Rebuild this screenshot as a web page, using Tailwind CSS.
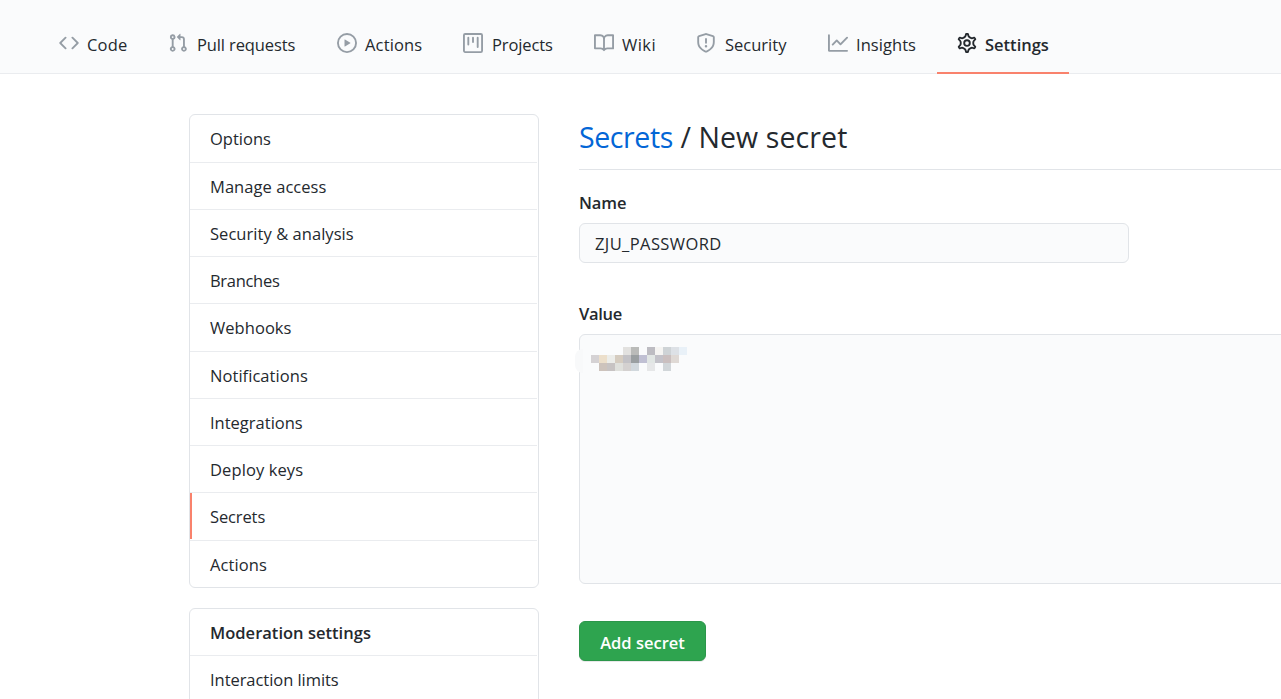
<!DOCTYPE html>
<html lang="en">
<head>
<meta charset="utf-8">
<title>New secret</title>
<script src="https://cdn.jsdelivr.net/npm/@tailwindcss/browser@4"></script>
</head>
<body class="h-[699px] w-[1281px] overflow-hidden bg-white font-['Open_Sans','Noto_Sans',sans-serif] text-[16.5px] leading-6 text-[#24292e]">
<nav class="flex h-[74px] items-end border-b border-[#eaecef] bg-[#fafbfc] pl-[39px] whitespace-nowrap">
  <a class="flex h-[61px] w-[109px] shrink-0 gap-2 pt-[21px] pl-5"><svg class="size-5 shrink-0 fill-[#959da5]" viewBox="0 0 16 16"><path d="M4.72 3.22a.75.75 0 011.06 1.06L2.06 8l3.72 3.72a.75.75 0 11-1.06 1.06L.47 8.53a.75.75 0 010-1.06l4.25-4.25zm6.56 0a.75.75 0 10-1.06 1.06L13.94 8l-3.72 3.72a.75.75 0 101.06 1.06l4.25-4.25a.75.75 0 000-1.06l-4.25-4.25z"/></svg><span class="tracking-[0.2px]">Code</span></a>
  <a class="flex h-[61px] w-[169px] shrink-0 gap-[9px] pt-[21px] pl-5"><svg class="size-5 shrink-0 fill-[#959da5]" viewBox="0 0 16 16"><path fill-rule="evenodd" d="M7.177 3.073L9.573.677A.25.25 0 0110 .854v4.792a.25.25 0 01-.427.177L7.177 3.427a.25.25 0 010-.354zM3.75 2.5a.75.75 0 100 1.5.75.75 0 000-1.5zm-2.25.75a2.25 2.25 0 113 2.122v5.256a2.251 2.251 0 11-1.5 0V5.372A2.25 2.25 0 011.5 3.25zM11 2.5h-1V4h1a1 1 0 011 1v5.628a2.251 2.251 0 101.5 0V5A2.5 2.5 0 0011 2.5zm1 10.25a.75.75 0 111.5 0 .75.75 0 01-1.5 0zM3.75 12a.75.75 0 100 1.5.75.75 0 000-1.5z"/></svg><span class="tracking-[-0.12px]">Pull requests</span></a>
  <a class="flex h-[61px] w-[126px] shrink-0 gap-2 pt-[21px] pl-5"><svg class="size-5 shrink-0 fill-[#959da5]" viewBox="0 0 16 16"><path fill-rule="evenodd" d="M1.5 8a6.5 6.5 0 1113 0 6.5 6.5 0 01-13 0zM8 0a8 8 0 100 16A8 8 0 008 0zM6.379 5.227A.25.25 0 006 5.442v5.117a.25.25 0 00.379.214l4.264-2.559a.25.25 0 000-.428L6.379 5.227z"/></svg><span class="tracking-[0.15px]">Actions</span></a>
  <a class="flex h-[61px] w-[131px] shrink-0 gap-[9px] pt-[21px] pl-5"><svg class="size-5 shrink-0 fill-[#959da5]" viewBox="0 0 16 16"><path fill-rule="evenodd" d="M1.75 0A1.75 1.75 0 000 1.75v12.5C0 15.216.784 16 1.75 16h12.5A1.75 1.75 0 0016 14.25V1.75A1.75 1.75 0 0014.25 0H1.75zM1.5 1.75a.25.25 0 01.25-.25h12.5a.25.25 0 01.25.25v12.5a.25.25 0 01-.25.25H1.75a.25.25 0 01-.25-.25V1.75zM11.75 3a.75.75 0 00-.75.75v7.5a.75.75 0 001.5 0v-7.5a.75.75 0 00-.75-.75zm-8.25.75a.75.75 0 011.5 0v5.5a.75.75 0 01-1.5 0v-5.5zM8 3a.75.75 0 00-.75.75v3.5a.75.75 0 001.5 0v-3.5A.75.75 0 008 3z"/></svg><span class="tracking-[-0.1px]">Projects</span></a>
  <a class="flex h-[61px] w-[102px] shrink-0 gap-2 pt-[21px] pl-5"><svg class="size-5 shrink-0 fill-[#959da5]" viewBox="0 0 16 16"><path fill-rule="evenodd" d="M0 1.75A.75.75 0 01.75 1h4.253c1.227 0 2.317.59 3 1.501A3.744 3.744 0 0111.006 1h4.245a.75.75 0 01.75.75v10.5a.75.75 0 01-.75.75h-4.507a2.25 2.25 0 00-1.591.659l-.622.621a.75.75 0 01-1.06 0l-.622-.621A2.25 2.25 0 005.258 13H.75a.75.75 0 01-.75-.75V1.75zm8.755 3a2.25 2.25 0 012.25-2.25H14.5v9h-3.757c-.71 0-1.4.201-1.992.572l.004-7.322zm-1.504 7.324l.004-5.073-.002-2.253A2.25 2.25 0 005.003 2.5H1.5v9h3.757a3.75 3.75 0 011.994.574z"/></svg><span class="tracking-[0.45px]">Wiki</span></a>
  <a class="flex h-[61px] w-[132px] shrink-0 gap-[9px] pt-[21px] pl-5"><svg class="size-5 shrink-0 fill-[#959da5]" viewBox="0 0 16 16"><path fill-rule="evenodd" d="M7.467.133a1.75 1.75 0 011.066 0l5.25 1.68A1.75 1.75 0 0115 3.48V7c0 1.566-.32 3.182-1.303 4.682-.983 1.498-2.585 2.813-5.032 3.855a1.7 1.7 0 01-1.33 0c-2.447-1.042-4.049-2.357-5.032-3.855C1.32 10.182 1 8.566 1 7V3.48a1.75 1.75 0 011.217-1.667l5.25-1.68zm.61 1.429a.25.25 0 00-.153 0l-5.25 1.68a.25.25 0 00-.174.238V7c0 1.358.275 2.666 1.057 3.86.784 1.194 2.121 2.34 4.366 3.297a.2.2 0 00.154 0c2.245-.956 3.582-2.104 4.366-3.298C13.225 9.666 13.5 8.36 13.5 7V3.48a.25.25 0 00-.174-.237l-5.25-1.68zM9 10.5a1 1 0 11-2 0 1 1 0 012 0zm-.25-5.75a.75.75 0 10-1.5 0v3a.75.75 0 001.5 0v-3z"/></svg><span class="tracking-[0px]">Security</span></a>
  <a class="flex h-[61px] w-[129px] shrink-0 gap-2 pt-[21px] pl-5"><svg class="size-5 shrink-0 fill-[#959da5]" viewBox="0 0 16 16"><path fill-rule="evenodd" d="M1.5 1.75a.75.75 0 00-1.5 0v12.5c0 .414.336.75.75.75h14.5a.75.75 0 000-1.5H1.5V1.75zm14.28 2.53a.75.75 0 00-1.06-1.06L10 7.94 7.53 5.47a.75.75 0 00-1.06 0L3.22 8.72a.75.75 0 001.06 1.06L7 7.06l2.47 2.47a.75.75 0 001.06 0l5.25-5.25z"/></svg><span class="tracking-[0.05px]">Insights</span></a>
  <a class="-mb-px flex h-[61px] w-[132px] shrink-0 gap-2 border-b-2 border-[#f9826c] pt-5 pl-5 font-semibold"><svg class="size-5 shrink-0 fill-none stroke-[#24292e]" viewBox="0 0 16 16"><path transform="translate(8 8) scale(1.12) translate(-8 -8)" stroke-width="1.34" d="M7.429 1.525a6.593 6.593 0 011.142 0c.036.003.108.036.137.146l.289 1.105c.147.56.55.967.997 1.189.174.086.341.183.501.29.417.278.97.423 1.53.27l1.102-.303c.11-.03.175.016.195.046.219.31.41.641.573.989.014.031.022.11-.059.19l-.815.806c-.411.406-.562.957-.53 1.456a4.588 4.588 0 010 .582c-.032.499.119 1.05.53 1.456l.815.806c.08.08.073.159.059.19a6.494 6.494 0 01-.573.99c-.02.029-.086.074-.195.045l-1.103-.303c-.559-.153-1.112-.008-1.529.27-.16.107-.327.204-.5.29-.449.222-.851.628-.998 1.189l-.289 1.105c-.029.11-.101.143-.137.146a6.613 6.613 0 01-1.142 0c-.036-.003-.108-.037-.137-.146l-.289-1.105c-.147-.56-.55-.967-.997-1.189a4.502 4.502 0 01-.501-.29c-.417-.278-.97-.423-1.53-.27l-1.102.303c-.11.03-.175-.016-.195-.046a6.492 6.492 0 01-.573-.989c-.014-.031-.022-.11.059-.19l.815-.806c.411-.406.562-.957.53-1.456a4.587 4.587 0 010-.582c.032-.499-.119-1.05-.53-1.456l-.815-.806c-.08-.08-.073-.159-.059-.19a6.44 6.44 0 01.573-.99c.02-.029.086-.075.195-.045l1.103.303c.559.153 1.112.008 1.529-.27.16-.107.327-.204.5-.29.449-.222.851-.628.998-1.189l.289-1.105c.029-.11.101-.143.137-.146z"/><circle cx="8" cy="8" r="2.25" stroke-width="1.5"/></svg><span class="tracking-[0px]">Settings</span></a>
</nav>
<div class="flex gap-10 pt-10 pl-[189px]">
  <aside class="flex w-[350px] shrink-0 flex-col gap-5">
    <div class="flex h-[474px] flex-col rounded-md border border-[#e1e4e8] pr-px">
      <a class="h-12 border-b border-[#eaecef] pt-3 pl-5"><span class="tracking-[0px]">Options</span></a>
      <a class="h-[47px] border-b border-[#eaecef] pt-3 pl-5"><span class="tracking-[0.05px]">Manage access</span></a>
      <a class="h-[47px] border-b border-[#eaecef] pt-3 pl-5"><span class="tracking-[0.05px]">Security &amp; analysis</span></a>
      <a class="h-[47px] border-b border-[#eaecef] pt-3 pl-5"><span class="tracking-[-0.3px]">Branches</span></a>
      <a class="h-12 border-b border-[#eaecef] pt-3 pl-5"><span class="tracking-[0.05px]">Webhooks</span></a>
      <a class="h-[47px] border-b border-[#eaecef] pt-3 pl-5"><span class="tracking-[0.05px]">Notifications</span></a>
      <a class="h-[47px] border-b border-[#eaecef] pt-3 pl-5"><span class="tracking-[0px]">Integrations</span></a>
      <a class="h-[47px] border-b border-[#eaecef] pt-3 pl-5"><span class="tracking-[0.1px]">Deploy keys</span></a>
      <a class="flex h-12 border-b border-[#eaecef]"><i class="h-[46px] w-0.5 bg-[#f9826c]"></i><span class="pt-3 pl-[18px] tracking-[-0.12px]">Secrets</span></a>
      <a class="pt-3 pl-5"><span class="tracking-[0.1px]">Actions</span></a>
    </div>
    <div class="flex h-[120px] flex-col rounded-md border border-[#e1e4e8] pr-px">
      <div class="h-[47px] border-b border-[#eaecef] pt-3 pl-5 font-semibold"><span class="tracking-[0.02px]">Moderation settings</span></div>
      <a class="pt-3 pl-5"><span class="tracking-[-0.05px]">Interaction limits</span></a>
    </div>
  </aside>
  <main class="flex w-[740px] shrink-0 flex-col items-start">
    <h2 class="h-14 w-full border-b border-[#e1e4e8] pt-[3px] text-[28.5px] leading-10"><a class="tracking-[-0.4px] text-[#0366d6]">Secrets</a><span class="tracking-[0.1px]"> / New secret</span></h2>
    <label class="mt-[21px] font-semibold"><span class="tracking-[-0.1px]">Name</span></label>
    <div class="mt-2 h-10 w-[550px] rounded-md border border-[#e1e4e8] bg-[#fafbfc] pt-2 pl-[15px]"><span class="tracking-[0.4px]">ZJU_PASSWORD</span></div>
    <label class="mt-[39px] font-semibold"><span class="tracking-[-0.3px]">Value</span></label>
    <div class="relative mt-2 h-[250px] w-full rounded-md border border-[#e1e4e8] bg-[#fafbfc] pt-3 pl-[11px]">
      <i class="absolute top-[14px] -left-[5px] h-6 w-2 rounded-l-full bg-[#f8f9fa]"></i>
      <svg class="h-6 w-24" viewBox="0 0 12 3" shape-rendering="crispEdges">
        <path fill="#e2e1df" d="M4 0h1v1h-1z"/><path fill="#babbb9" d="M5 0h1v1h-1z"/><path fill="#bdbcc2" d="M7 0h1v1h-1z"/><path fill="#f5f4f2" d="M8 0h1v1h-1z"/><path fill="#ced3d6" d="M9 0h1v1h-1z"/><path fill="#dde1e6" d="M10 0h1v1h-1z"/><path fill="#e9f1f8" d="M11 0h1v1h-1z"/>
        <path fill="#d5d2d4" d="M0 1h1v1h-1z"/><path fill="#ecdfcb" d="M1 1h1v1h-1z"/><path fill="#ecedea" d="M2 1h1v1h-1z"/><path fill="#d5ccc0" d="M3 1h1v1h-1z"/><path fill="#c3c2c6" d="M4 1h1v1h-1z"/><path fill="#9a9fa1" d="M5 1h1v1h-1z"/><path fill="#c0c0d3" d="M6 1h1v1h-1z"/><path fill="#e1e6e4" d="M7 1h1v1h-1z"/><path fill="#c3c2c9" d="M8 1h1v1h-1z"/><path fill="#cabfbf" d="M9 1h1v1h-1z"/><path fill="#dfd9d5" d="M10 1h1v1h-1z"/>
        <path fill="#cdc3bc" d="M1 2h1v1h-1z"/><path fill="#c7c3c3" d="M2 2h1v1h-1z"/><path fill="#dfe0dc" d="M3 2h1v1h-1z"/><path fill="#d4d1d0" d="M4 2h1v1h-1z"/><path fill="#d1d8dd" d="M5 2h1v1h-1z"/><path fill="#e6e7e8" d="M7 2h1v1h-1z"/><path fill="#d1d6d9" d="M9 2h1v1h-1z"/>
      </svg>
    </div>
    <button class="mt-[37px] h-10 w-[127px] rounded-md border border-[#2b964a] bg-[#2ea44f] pt-[3px] font-semibold text-white shadow-[0_1px_0_rgba(27,31,35,0.1)]"><span class="tracking-[0px]">Add secret</span></button>
  </main>
</div>
</body>
</html>
